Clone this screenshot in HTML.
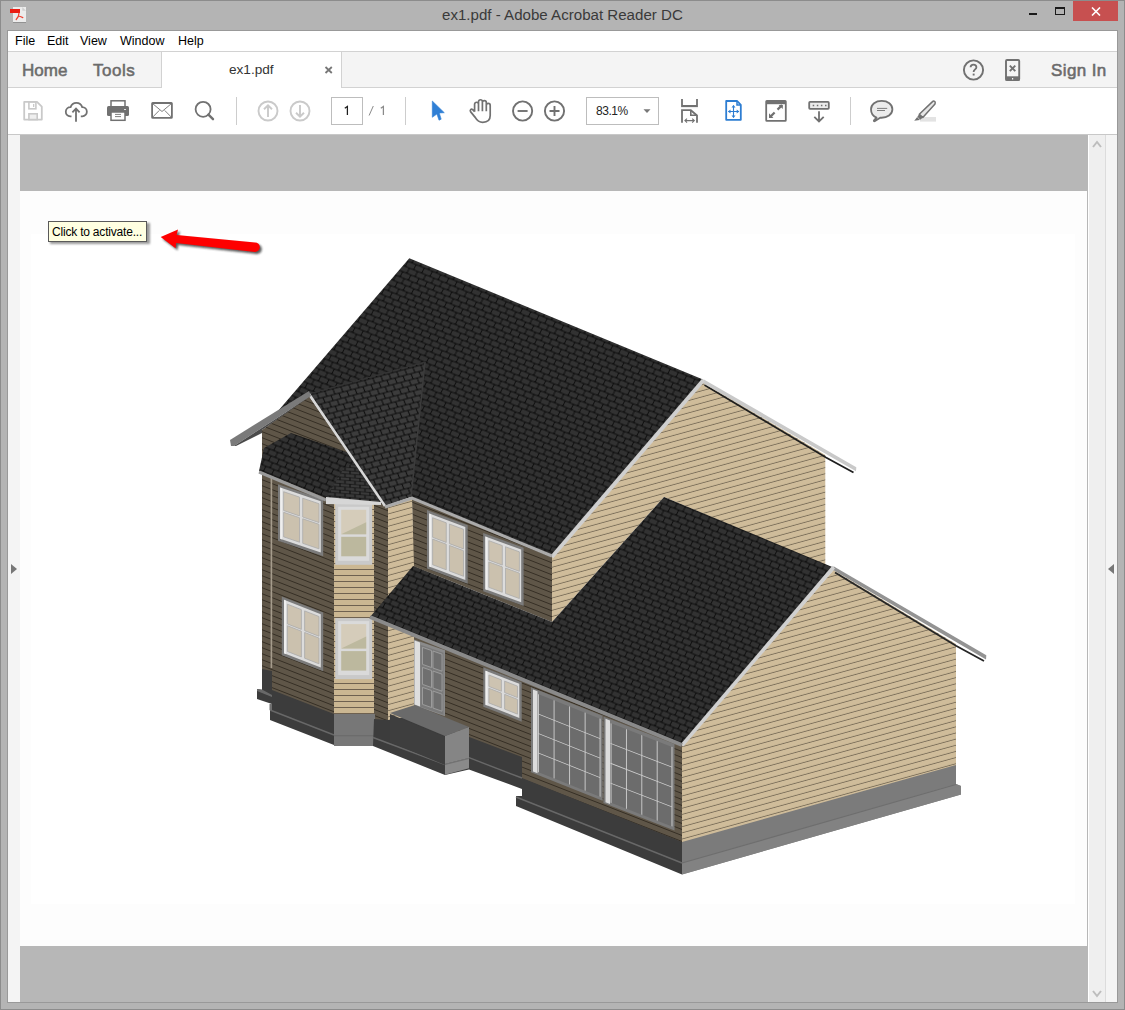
<!DOCTYPE html>
<html><head><meta charset="utf-8">
<style>
*{margin:0;padding:0;box-sizing:border-box}
html,body{width:1125px;height:1010px;overflow:hidden;background:#b4b4b4;font-family:"Liberation Sans",sans-serif}
.a{position:absolute}
.t{position:absolute;white-space:nowrap;line-height:1}
</style></head><body>
<!-- outer frame -->
<div class="a" style="left:0;top:0;width:1125px;height:1010px;border:1px solid #8c8c8c;border-right-color:#8c8c8c"></div>
<!-- title -->
<svg class="a" style="left:0;top:0" width="30" height="26" viewBox="0 0 30 26">
  <rect x="13" y="7" width="13" height="15" fill="#ececec"/>
  <rect x="13" y="22" width="13" height="0.8" fill="#8a8a8a"/>
  <path d="M22.3 7 L26 10.7 L22.3 10.7 Z" fill="#d0d0d0"/>
  <rect x="10" y="9" width="10" height="4" fill="#ea1c12"/>
  <path d="M19 13 C19 15.5 18 17.5 16.2 19.5 M18.4 16 C20 16.5 21.5 17 22.8 17.6" stroke="#ee4031" stroke-width="1.2" fill="none" stroke-linecap="round"/>
</svg>
<div class="t" style="left:442px;top:7px;font-size:15.1px;color:#3a3a3a">ex1.pdf - Adobe Acrobat Reader DC</div>
<div class="a" style="left:1029px;top:13px;width:8px;height:2px;background:#1a1a1a"></div>
<div class="a" style="left:1055px;top:7px;width:10px;height:8px;border:1px solid #1a1a1a;border-top-width:2px"></div>
<div class="a" style="left:1073px;top:1px;width:45px;height:20px;background:#c75050"></div>
<svg class="a" style="left:1091px;top:7px" width="10" height="9" viewBox="0 0 10 9"><path d="M1 0.5 L9 8.5 M9 0.5 L1 8.5" stroke="#fff" stroke-width="1.6"/></svg>

<!-- content box -->
<div class="a" style="left:7px;top:30px;width:1111px;height:973px;border:1px solid #999;background:#fff"></div>
<!-- menu -->
<div class="t" style="left:15px;top:35px;font-size:12.5px;color:#000">File</div>
<div class="t" style="left:47px;top:35px;font-size:12.5px;color:#000">Edit</div>
<div class="t" style="left:80px;top:35px;font-size:12.5px;color:#000">View</div>
<div class="t" style="left:120px;top:35px;font-size:12.5px;color:#000">Window</div>
<div class="t" style="left:178px;top:35px;font-size:12.5px;color:#000">Help</div>
<!-- tab bar -->
<div class="a" style="left:8px;top:51px;width:1109px;height:37px;background:#f4f4f4;border-top:1px solid #d2d2d2;border-bottom:1px solid #d2d2d2"></div>
<div class="a" style="left:161px;top:51px;width:181px;height:37px;background:#fff;border:1px solid #d2d2d2;border-bottom:none;border-top-color:#d2d2d2"></div>
<div class="t" style="left:22px;top:62px;font-size:17px;color:#6b6b6b;-webkit-text-stroke:0.55px #6b6b6b">Home</div>
<div class="t" style="left:93px;top:62px;font-size:17px;color:#6b6b6b;-webkit-text-stroke:0.55px #6b6b6b;letter-spacing:0.5px">Tools</div>
<div class="t" style="left:229px;top:63px;font-size:13.6px;color:#333">ex1.pdf</div>
<svg class="a" style="left:324px;top:66px" width="9" height="8" viewBox="0 0 9 8"><path d="M1.5 1 L7.8 7 M7.8 1 L1.5 7" stroke="#777" stroke-width="1.8"/></svg>
<div class="t" style="left:1051px;top:62px;font-size:17px;color:#6b6b6b;-webkit-text-stroke:0.55px #6b6b6b;letter-spacing:0.4px">Sign In</div>


<!-- toolbar icons -->
<svg class="a" style="left:0;top:88px" width="960" height="46" viewBox="0 88 960 46">
  <!-- save -->
  <path d="M24.2 101.9 H37 L41.8 106.7 V119.6 H24.2 Z" fill="none" stroke="#c9c9c9" stroke-width="1.8" stroke-linejoin="round"/>
  <rect x="28.9" y="101.9" width="7" height="6.9" fill="none" stroke="#c9c9c9" stroke-width="1.6"/>
  <rect x="33" y="104" width="1.3" height="3" fill="#c9c9c9"/>
  <rect x="28.9" y="113.8" width="8.3" height="5.8" fill="#efefef" stroke="#c9c9c9" stroke-width="1.6"/>
  <!-- cloud -->
  <path d="M71.5 116.3 H70.2 A4.6 4.6 0 0 1 70.6 107.1 A6.1 6.1 0 0 1 82.2 107.1 A4.6 4.6 0 0 1 82.3 116.3 H80.8" fill="none" stroke="#717171" stroke-width="1.8"/>
  <path d="M76 121.8 V108.6 M72.4 112.3 L76 108.6 L79.6 112.3" fill="none" stroke="#717171" stroke-width="1.8"/>
  <!-- printer -->
  <rect x="111" y="100.8" width="14" height="7" fill="#fff" stroke="#717171" stroke-width="1.5"/>
  <rect x="107" y="106" width="22" height="10" rx="1.5" fill="#717171"/>
  <rect x="124" y="109" width="2" height="1" fill="#e0e0e0"/>
  <rect x="111" y="112" width="14" height="8.3" fill="#fff" stroke="#717171" stroke-width="1.5"/>
  <path d="M115 114.4 H121 M115 116.6 H121" stroke="#717171" stroke-width="0.9"/>
  <!-- mail -->
  <rect x="152.1" y="103" width="19.8" height="14.8" rx="0.6" fill="none" stroke="#717171" stroke-width="1.8"/>
  <path d="M152.5 103.5 L162 111.5 L171.5 103.5 M152.5 117.3 L159.3 110.4 M171.5 117.3 L164.7 110.4" fill="none" stroke="#717171" stroke-width="0.9"/>
  <!-- search -->
  <circle cx="203.1" cy="109.3" r="7.5" fill="none" stroke="#717171" stroke-width="1.8"/>
  <path d="M208.4 114.6 L213 119.2" stroke="#717171" stroke-width="2.4" stroke-linecap="round"/>
  <rect x="236" y="97" width="1" height="28" fill="#cdcdcd"/>
  <!-- up/down -->
  <circle cx="268" cy="111" r="9.5" fill="none" stroke="#cacaca" stroke-width="1.9"/>
  <path d="M268 117 V105.5 M264 109.3 L268 105.4 L272 109.3" fill="none" stroke="#cacaca" stroke-width="1.9"/>
  <circle cx="300" cy="111" r="9.5" fill="none" stroke="#cacaca" stroke-width="1.9"/>
  <path d="M300 105 V116.5 M296 112.7 L300 116.6 L304 112.7" fill="none" stroke="#cacaca" stroke-width="1.9"/>
  <rect x="331.5" y="97.5" width="31" height="27" fill="#fff" stroke="#bdbdbd" stroke-width="1"/>
  <rect x="405" y="97" width="1" height="28" fill="#cdcdcd"/>
  <!-- pointer -->
  <path d="M432.3 101 V117.3 L436.9 114 L439 120.2 L441.2 119.2 L439.3 113 L444.3 112.7 Z" fill="#2f7fd5" stroke="#2f7fd5" stroke-width="0.6" stroke-linejoin="round"/>
  <!-- hand -->
  <path d="M474.6 111.8 V104.2 A1.95 1.95 0 0 1 478.5 104.2 V111.2 M478.5 104.2 V101.7 A1.95 1.95 0 0 1 482.4 101.7 V111.2 M482.4 102.6 A1.95 1.95 0 0 1 486.3 102.6 V111.2 M486.3 105.4 A1.95 1.95 0 0 1 490.2 105.4 V115.6 C490.2 120 487.4 122.3 482.8 122.3 C478.6 122.3 476.9 120.4 475.4 117.6 L470.7 111.9 C469.5 110.4 471 108.4 472.7 109.6 L474.6 111.6" fill="none" stroke="#717171" stroke-width="1.7" stroke-linejoin="round"/>
  <!-- zoom out/in -->
  <circle cx="522.6" cy="111" r="9.6" fill="none" stroke="#717171" stroke-width="1.9"/>
  <path d="M517.6 111 H527.6" stroke="#717171" stroke-width="1.9"/>
  <circle cx="554.5" cy="111" r="9.6" fill="none" stroke="#717171" stroke-width="1.9"/>
  <path d="M549.5 111 H559.5 M554.5 106 V116" stroke="#717171" stroke-width="1.9"/>
  <rect x="586.5" y="97.5" width="72" height="27" fill="#fff" stroke="#bdbdbd" stroke-width="1"/>
  <path d="M643.5 109.3 H650.5 L647 113 Z" fill="#777"/>
  <!-- scroll -->
  <path d="M682 99 V106 H697 V99" fill="none" stroke="#717171" stroke-width="1.8"/>
  <rect x="681" y="107.2" width="17" height="1" fill="#e6e6e6"/>
  <path d="M682 122.7 V110.2 H690.8 L697 115.5 V122.7" fill="none" stroke="#717171" stroke-width="1.8"/>
  <path d="M690.8 110.2 V115.3 H697" fill="none" stroke="#717171" stroke-width="1.6"/>
  <path d="M685 120.6 H694.2 M687 118.6 L684.9 120.6 L687 122.6 M692.2 118.6 L694.3 120.6 L692.2 122.6" fill="none" stroke="#717171" stroke-width="1.1"/>
  <!-- fit page -->
  <path d="M726.2 101 H737.2 L740.8 104.8 V119.8 H726.2 Z" fill="none" stroke="#2d7dd2" stroke-width="1.8" stroke-linejoin="round"/>
  <path d="M737 101 V105 H741" fill="none" stroke="#2d7dd2" stroke-width="1.5"/>
  <path d="M733.5 105.5 V117.5 M728.5 111.5 H738.8" stroke="#2d7dd2" stroke-width="1.1"/>
  <path d="M731.5 107.6 L733.5 104.9 L735.5 107.6 Z M731.5 115.4 L733.5 118.1 L735.5 115.4 Z M730.5 109.5 L727.9 111.5 L730.5 113.5 Z M736.7 109.5 L739.3 111.5 L736.7 113.5 Z" fill="#2d7dd2"/>
  <!-- full screen -->
  <rect x="766.2" y="101" width="19.6" height="19.8" rx="0.6" fill="none" stroke="#717171" stroke-width="1.8"/>
  <rect x="766" y="101" width="20" height="3.2" fill="#717171"/>
  <path d="M777.5 109.6 L782 105.1 M774.6 112.5 L770 117.1" stroke="#717171" stroke-width="2.2"/>
  <path d="M778.6 104.9 H782.8 V109.1 Z M769 113.2 V117.9 H773.4 Z" fill="#717171"/>
  <!-- read mode -->
  <rect x="809.2" y="101.9" width="19.6" height="6.9" rx="0.8" fill="#ececec" stroke="#717171" stroke-width="1.8"/>
  <path d="M812.7 105.4 h1.5 M816.8 105.4 h1.5 M820.9 105.4 h1.5 M825 105.4 h1.5" stroke="#717171" stroke-width="1.5"/>
  <path d="M819 111.2 V121.3 M814.3 116.8 L819 121.5 L823.7 116.8" fill="none" stroke="#717171" stroke-width="1.8"/>
  <rect x="850" y="97" width="1" height="28" fill="#cdcdcd"/>
  <!-- comment -->
  <path d="M876.5 117.6 L874 120.3 C873.6 120.8 874 121.4 874.6 121.2 L880.2 117.7 C887.5 118.2 892.4 114.3 892.4 109.2 C892.4 104.3 887.8 100.9 881.7 100.9 C875.6 100.9 871 104.3 871 109.2 C871 113 873.2 116.2 876.5 117.6 Z" fill="#ececec" stroke="#717171" stroke-width="1.8" stroke-linejoin="round"/>
  <path d="M877 108.4 H887.2 M877 110.5 H885" stroke="#717171" stroke-width="0.9"/>
  <!-- highlighter -->
  <rect x="920" y="117" width="16" height="4.6" fill="#e3e3e3"/>
  <path d="M919.3 114.2 L932.5 101.6 C933.5 100.6 935.2 101 935.2 102.5 L935 104 L922.8 117.5 Z" fill="#e6e6e6" stroke="#717171" stroke-width="1.5" stroke-linejoin="round"/>
  <path d="M919.2 114 L922.9 117.6 L920.2 119.7 L917.4 116.8 Z" fill="#717171"/>
  <path d="M917.2 117 L919.9 119.9 L914.2 120.8 Z" fill="#717171"/>
</svg>
<svg class="a" style="left:330px;top:98px" width="60" height="26" viewBox="330 98 60 26">
  <path d="M344.8 108.2 L347.4 106.4 V115" fill="none" stroke="#1e1e1e" stroke-width="1.25"/>
  <path d="M369.1 115.5 L373.3 106" fill="none" stroke="#8a8a8a" stroke-width="1"/>
  <path d="M380.8 108.2 L383.4 106.4 V115" fill="none" stroke="#8a8a8a" stroke-width="1.25"/>
</svg>
<div class="t" style="left:596px;top:105px;font-size:12px;color:#222;letter-spacing:-0.45px">83.1%</div>
<!-- tab bar icons -->
<svg class="a" style="left:960px;top:55px" width="70" height="30" viewBox="960 55 70 30">
  <circle cx="973.5" cy="70" r="9.6" fill="none" stroke="#717171" stroke-width="1.9"/>
  <path d="M970.6 67.3 C970.6 63.6 976.4 63.6 976.4 67.3 C976.4 69.3 973.6 69.6 973.6 72" fill="none" stroke="#717171" stroke-width="1.8"/>
  <rect x="972.7" y="73.6" width="1.9" height="1.9" fill="#717171"/>
  <rect x="1006" y="60" width="13.2" height="20" rx="1" fill="none" stroke="#717171" stroke-width="1.9"/>
  <rect x="1005.5" y="76.3" width="14.2" height="4.3" fill="#717171"/>
  <rect x="1012" y="78" width="1.2" height="1.5" fill="#f4f4f4"/>
  <path d="M1009.8 65.6 L1015.3 71.2 M1015.3 65.6 L1009.8 71.2" stroke="#717171" stroke-width="1.9"/>
</svg>
<!-- toolbar bottom border -->
<div class="a" style="left:8px;top:134px;width:1109px;height:1px;background:#c8c8c8"></div>

<!-- doc area -->
<div class="a" style="left:8px;top:135px;width:12px;height:867px;background:#f4f4f4"></div>
<div class="a" style="left:20px;top:135px;width:1068px;height:867px;background:#b7b7b7"></div>
<div class="a" style="left:20px;top:191px;width:1067px;height:755px;background:#fdfdfd"></div>
<div class="a" style="left:31px;top:234px;width:1044px;height:670px;background:#fff"></div>
<div class="a" style="left:1088px;top:135px;width:1px;height:867px;background:#fff"></div>
<div class="a" style="left:1089px;top:135px;width:16px;height:867px;background:#efefef"></div>
<div class="a" style="left:1105px;top:135px;width:1px;height:867px;background:#dcdcdc"></div>
<div class="a" style="left:1106px;top:135px;width:11px;height:867px;background:#f4f4f4"></div>
<svg class="a" style="left:10px;top:563px" width="8" height="12"><path d="M1 1 L7 6 L1 11 Z" fill="#777"/></svg>
<svg class="a" style="left:1107px;top:563px" width="8" height="12"><path d="M7 1 L1 6 L7 11 Z" fill="#777"/></svg>
<svg class="a" style="left:1092px;top:140px" width="10" height="8"><path d="M1 7 L5 2 L9 7" stroke="#bdbdbd" stroke-width="2" fill="none"/></svg>
<svg class="a" style="left:1092px;top:990px" width="10" height="8"><path d="M1 1 L5 6 L9 1" stroke="#bdbdbd" stroke-width="2" fill="none"/></svg>


<svg class="a" style="left:0;top:0" width="1125" height="1010" viewBox="0 0 1125 1010">
<defs>
  <pattern id="sideF" width="20" height="6" patternUnits="userSpaceOnUse" patternTransform="matrix(1 0.39 0 1 0 0)">
    <rect width="20" height="6" fill="#5f5648"/>
    <rect y="5" width="20" height="1" fill="#352e24"/>
  </pattern>
  <pattern id="sideR" width="20" height="6.15" patternUnits="userSpaceOnUse" patternTransform="matrix(1 -0.275 0 1 0 0)">
    <rect width="20" height="6.15" fill="#cfbc9a"/>
    <rect y="5.2" width="20" height="0.95" fill="#7d705b"/>
  </pattern>
  <pattern id="sideB" width="20" height="6" patternUnits="userSpaceOnUse">
    <rect width="20" height="6" fill="#cbb792"/>
    <rect y="5" width="20" height="1" fill="#6e6150"/>
  </pattern>
  <pattern id="shF" width="8.2" height="10.4" patternUnits="userSpaceOnUse" patternTransform="matrix(1 0.41 -0.5 1 0 0)">
    <rect width="8.2" height="10.4" fill="#0f0f0f"/>
    <rect x="0.45" y="0.45" width="7.3" height="4.3" rx="1" fill="#323232"/>
    <rect x="-3.65" y="5.65" width="7.3" height="4.3" rx="1" fill="#323232"/>
    <rect x="4.55" y="5.65" width="7.3" height="4.3" rx="1" fill="#323232"/>
  </pattern>
  <pattern id="shR" width="8" height="10.8" patternUnits="userSpaceOnUse" patternTransform="matrix(1 -0.27 0.4 1 0 0)">
    <rect width="8" height="10.8" fill="#101010"/>
    <rect x="0.55" y="0.55" width="6.9" height="4.3" rx="0.6" fill="#3c3c3c"/>
    <rect x="-3.45" y="5.95" width="6.9" height="4.3" rx="0.6" fill="#3c3c3c"/>
    <rect x="4.55" y="5.95" width="6.9" height="4.3" rx="0.6" fill="#3c3c3c"/>
  </pattern>
  <pattern id="shG" width="9.5" height="12.06" patternUnits="userSpaceOnUse" patternTransform="matrix(1 0.41 -0.4 1 0 0)">
    <rect width="9.5" height="12.06" fill="#0e0e0e"/>
    <rect x="0.55" y="0.55" width="8.4" height="4.95" rx="0.8" fill="#2d2d2d"/>
    <rect x="-4.2" y="6.58" width="8.4" height="4.95" rx="0.8" fill="#2d2d2d"/>
    <rect x="5.3" y="6.58" width="8.4" height="4.95" rx="0.8" fill="#2d2d2d"/>
  </pattern>
  <pattern id="brick" width="10" height="6.6" patternUnits="userSpaceOnUse" patternTransform="matrix(1 0.08 0 1 0 0.5)">
    <rect width="10" height="6.6" fill="#121212"/>
    <rect x="0.6" y="0.6" width="8.8" height="2.6" fill="#3a3a3a"/>
    <rect x="-4.4" y="3.9" width="8.8" height="2.6" fill="#3a3a3a"/>
    <rect x="5.6" y="3.9" width="8.8" height="2.6" fill="#3a3a3a"/>
  </pattern>
  <filter id="blur1" x="-20%" y="-50%" width="140%" height="200%"><feGaussianBlur stdDeviation="1.2"/></filter>
</defs>
<polygon points="409.3,258.2 703,379.5 552,556 412,499 309,396 272,418" fill="url(#shF)" />
<polygon points="703,382 825.3,455 825.3,565 664,497 552,622 552,556" fill="url(#sideR)" />
<polygon points="412,499 552,556 552,622 413,566" fill="url(#sideF)" />
<polygon points="309,396 262,430 262,673 272,675 272,693 334,717 334,503 386,507" fill="url(#sideF)" />
<rect x="334" y="503" width="40" height="214" fill="url(#sideB)"/>
<rect x="374" y="504" width="14" height="219" fill="url(#sideF)"/>
<polygon points="388,507 412,498 414,566 414,719 388,723" fill="url(#sideR)" />
<polygon points="414,566 682,680 682,845 522,782 522,761 414,719" fill="url(#sideF)" />
<polygon points="833.5,570 956,644 956,770 682,846 682,745" fill="url(#sideR)" />
<g transform="matrix(1 0.375 0 1 427 510)">
<rect x="0" y="0" width="40.7" height="58.5" fill="#7b7b7b"/>
<rect x="2.2" y="2.6" width="36.1" height="53.1" fill="#dcdcdc"/>
<rect x="2.2" y="2.6" width="2" height="53.1" fill="#efefef"/>
<rect x="5.6" y="5.6" width="13.65" height="19.61" fill="#cdc3b1" stroke="#a9a9a9" stroke-width="0.7"/>
<rect x="5.6" y="27.01" width="13.65" height="25.59" fill="#cbc1ae" stroke="#a9a9a9" stroke-width="0.7"/>
<rect x="22.45" y="5.6" width="14.05" height="19.61" fill="#cdc3b1" stroke="#a9a9a9" stroke-width="0.7"/>
<rect x="22.45" y="27.01" width="14.05" height="25.59" fill="#cbc1ae" stroke="#a9a9a9" stroke-width="0.7"/>
</g>
<g transform="matrix(1 0.366 0 1 483.2 533)">
<rect x="0" y="0" width="40.4" height="58.2" fill="#7b7b7b"/>
<rect x="2.2" y="2.6" width="35.8" height="52.8" fill="#dcdcdc"/>
<rect x="2.2" y="2.6" width="2" height="52.8" fill="#efefef"/>
<rect x="5.6" y="5.6" width="13.5" height="19.481" fill="#cdc3b1" stroke="#a9a9a9" stroke-width="0.7"/>
<rect x="5.6" y="26.881" width="13.5" height="25.419" fill="#cbc1ae" stroke="#a9a9a9" stroke-width="0.7"/>
<rect x="22.3" y="5.6" width="13.9" height="19.481" fill="#cdc3b1" stroke="#a9a9a9" stroke-width="0.7"/>
<rect x="22.3" y="26.881" width="13.9" height="25.419" fill="#cbc1ae" stroke="#a9a9a9" stroke-width="0.7"/>
</g>
<g transform="matrix(1 0.34 0 1 278 484.2)">
<rect x="0" y="0" width="45.2" height="56.6" fill="#7b7b7b"/>
<rect x="2.2" y="2.6" width="40.6" height="51.2" fill="#dcdcdc"/>
<rect x="2.2" y="2.6" width="2" height="51.2" fill="#efefef"/>
<rect x="5.6" y="5.6" width="15.9" height="18.793" fill="#cdc3b1" stroke="#a9a9a9" stroke-width="0.7"/>
<rect x="5.6" y="26.193" width="15.9" height="24.507" fill="#cbc1ae" stroke="#a9a9a9" stroke-width="0.7"/>
<rect x="24.7" y="5.6" width="16.3" height="18.793" fill="#cdc3b1" stroke="#a9a9a9" stroke-width="0.7"/>
<rect x="24.7" y="26.193" width="16.3" height="24.507" fill="#cbc1ae" stroke="#a9a9a9" stroke-width="0.7"/>
</g>
<g transform="matrix(1 0.39 0 1 281.8 596.4)">
<rect x="0" y="0" width="41.4" height="58.8" fill="#7b7b7b"/>
<rect x="2.2" y="2.6" width="36.8" height="53.4" fill="#dcdcdc"/>
<rect x="2.2" y="2.6" width="2" height="53.4" fill="#efefef"/>
<rect x="5.6" y="5.6" width="14" height="19.739" fill="#cdc3b1" stroke="#a9a9a9" stroke-width="0.7"/>
<rect x="5.6" y="27.139" width="14" height="25.761" fill="#cbc1ae" stroke="#a9a9a9" stroke-width="0.7"/>
<rect x="22.8" y="5.6" width="14.4" height="19.739" fill="#cdc3b1" stroke="#a9a9a9" stroke-width="0.7"/>
<rect x="22.8" y="27.139" width="14.4" height="25.761" fill="#cbc1ae" stroke="#a9a9a9" stroke-width="0.7"/>
</g>
<rect x="335.2" y="503.8" width="37" height="61" fill="#c9c9c9"/>
<rect x="338.2" y="506.8" width="31" height="54" fill="#dadada"/>
<rect x="341.2" y="509.8" width="25" height="24.5" fill="#d5ccba"/>
<polygon points="341.2,534.3 366.2,522.3 366.2,534.3 341.2,534.3" fill="#bdb99f"/>
<rect x="341.2" y="536.8" width="25" height="19.5" fill="#bcb89e"/>
<rect x="335.2" y="618.1" width="37" height="61" fill="#c9c9c9"/>
<rect x="338.2" y="621.1" width="31" height="54" fill="#dadada"/>
<rect x="341.2" y="624.1" width="25" height="24.5" fill="#d5ccba"/>
<polygon points="341.2,648.6 366.2,636.6 366.2,648.6 341.2,648.6" fill="#bdb99f"/>
<rect x="341.2" y="651.1" width="25" height="19.5" fill="#bcb89e"/>
<g transform="matrix(1 0.39 0 1 483.3 667.2)">
<rect x="0" y="0" width="38.4" height="39.5" fill="#7b7b7b"/>
<rect x="2.2" y="2.6" width="33.8" height="34.1" fill="#dcdcdc"/>
<rect x="2.2" y="2.6" width="2" height="34.1" fill="#efefef"/>
<rect x="5.6" y="5.6" width="12.5" height="11.44" fill="#cdc3b1" stroke="#a9a9a9" stroke-width="0.7"/>
<rect x="5.6" y="18.84" width="12.5" height="14.76" fill="#cbc1ae" stroke="#a9a9a9" stroke-width="0.7"/>
<rect x="21.3" y="5.6" width="12.9" height="11.44" fill="#cdc3b1" stroke="#a9a9a9" stroke-width="0.7"/>
<rect x="21.3" y="18.84" width="12.9" height="14.76" fill="#cbc1ae" stroke="#a9a9a9" stroke-width="0.7"/>
</g>
<g transform="matrix(1 0.397 0 1 531 687.2)">
<rect x="0" y="0" width="71.6" height="85" fill="#7a7a7a"/>
<rect x="2" y="1.5" width="4.5" height="82" fill="#dcdcdc"/>
<rect x="7" y="4" width="62.1" height="78" fill="#6c6c6c"/>
<rect x="7.1" y="4" width="0.9" height="78" fill="#d0d0d0"/>
<rect x="22.625" y="4" width="0.9" height="78" fill="#d0d0d0"/>
<rect x="38.15" y="4" width="0.9" height="78" fill="#d0d0d0"/>
<rect x="53.675" y="4" width="0.9" height="78" fill="#d0d0d0"/>
<rect x="68.6" y="4" width="0.9" height="78" fill="#d0d0d0"/>
<rect x="7" y="23.5" width="62.1" height="0.8" fill="#d0d0d0"/>
<rect x="7" y="43" width="62.1" height="0.8" fill="#d0d0d0"/>
<rect x="7" y="62.5" width="62.1" height="0.8" fill="#d0d0d0"/>
</g>
<g transform="matrix(1 0.387 0 1 603.5 716.4)">
<rect x="0" y="0" width="71" height="86.5" fill="#7a7a7a"/>
<rect x="2" y="1.5" width="4.5" height="83.5" fill="#dcdcdc"/>
<rect x="7" y="4" width="61.5" height="79.5" fill="#6c6c6c"/>
<rect x="7.1" y="4" width="0.9" height="79.5" fill="#d0d0d0"/>
<rect x="22.475" y="4" width="0.9" height="79.5" fill="#d0d0d0"/>
<rect x="37.85" y="4" width="0.9" height="79.5" fill="#d0d0d0"/>
<rect x="53.225" y="4" width="0.9" height="79.5" fill="#d0d0d0"/>
<rect x="68" y="4" width="0.9" height="79.5" fill="#d0d0d0"/>
<rect x="7" y="23.875" width="61.5" height="0.8" fill="#d0d0d0"/>
<rect x="7" y="43.75" width="61.5" height="0.8" fill="#d0d0d0"/>
<rect x="7" y="63.625" width="61.5" height="0.8" fill="#d0d0d0"/>
</g>
<g transform="matrix(1 0.35 0 1 414 639.4)">
<rect x="0" y="0" width="31" height="66" fill="#8a8a8a"/>
<rect x="0.5" y="1" width="5.5" height="64" fill="#dedede"/>
<rect x="6.5" y="3" width="23" height="62" fill="#7a7a7a"/>
<rect x="8.5" y="5" width="9" height="17" fill="#6f6f6f" stroke="#a8a8a8" stroke-width="0.7"/>
<rect x="19" y="5" width="9" height="17" fill="#6f6f6f" stroke="#a8a8a8" stroke-width="0.7"/>
<rect x="8.5" y="25" width="9" height="17" fill="#6f6f6f" stroke="#a8a8a8" stroke-width="0.7"/>
<rect x="19" y="25" width="9" height="17" fill="#6f6f6f" stroke="#a8a8a8" stroke-width="0.7"/>
<rect x="8.5" y="45" width="9" height="17" fill="#6f6f6f" stroke="#a8a8a8" stroke-width="0.7"/>
<rect x="19" y="45" width="9" height="17" fill="#6f6f6f" stroke="#a8a8a8" stroke-width="0.7"/>
</g>
<rect x="270.6" y="478" width="1.6" height="190" fill="#a59c8c"/>
<polygon points="309,394 425,362 411,497 385,506" fill="url(#shR)" />
<polygon points="291,433 349,453 385,506 381,503 326,498 259,471 264,448" fill="url(#shF)" />
<polygon points="326,498 344,468 357,461 384,504" fill="url(#brick)" />
<polyline points="425,362 411,497" stroke="#3c3c3c" stroke-width="1.5" fill="none" />
<polyline points="309,394 425,362" stroke="#343434" stroke-width="1.2" fill="none" />
<polygon points="370,617 413,566 552,622 664,497 833.5,567.5 682,745" fill="url(#shF)" />
<polyline points="704.5,385 826,457.5 853.5,472.5" stroke="#1e1e1e" stroke-width="1.8" fill="none" />
<polygon points="703.5,379.3 856.3,467.2 856,471.3 703.5,383.6" fill="#c9c9c9" />
<polygon points="702,378.8 705,381.2 553.3,558.2 550.6,555.4" fill="#cfcfcf" />
<polyline points="835,572.5 956,645.8 984,661" stroke="#262626" stroke-width="1.8" fill="none" />
<polygon points="833.5,566.3 986.3,655.2 986,659.5 833.5,570.3" fill="#939393" />
<polygon points="832.3,565.8 835,568.4 683.4,746.6 680.8,744" fill="#d0d0d0" />
<polyline points="309,394 385,506" stroke="#d8d8d8" stroke-width="2.5" fill="none" />
<polygon points="309,391 311,396 234,446 231,446 230,440" fill="#7a7a7a" />
<polygon points="311,396 262,430 262,433 236,446 234,446" fill="#4a4a4a" />
<polyline points="259,472 326,500" stroke="#9a9a9a" stroke-width="3" fill="none" />
<polygon points="326,497 381,502 381,505 326,504" fill="#d6d6d6" />
<polyline points="385,507 412,498 552,556" stroke="#aaaaaa" stroke-width="3" fill="none" />
<polyline points="370,617 682,745" stroke="#8a8a8a" stroke-width="4" fill="none" />
<polygon points="262,669 272,671 272,704 257,699 257,689 262,690" fill="#3c3c3c" />
<polygon points="257,689 262,689.5 272,695 272,697 257,691" fill="#686868" />
<polygon points="272,690 334,714 334,745 270,720 270,704 272,704" fill="#3c3c3c" />
<polyline points="270,710 334,735" stroke="#686868" stroke-width="1.4" fill="none" />
<polygon points="269.5,704 272,704 272,710 269.5,710" fill="#707070" />
<rect x="334" y="714" width="41" height="32" fill="#777777"/>
<rect x="334" y="735" width="41" height="1.3" fill="#6c6c6c"/>
<polygon points="374,719 388,720 414,716 522,757 522,789 469,769.5 445,775 373,746" fill="#3c3c3c" />
<polyline points="373,737.5 445,764.5" stroke="#686868" stroke-width="1.4" fill="none" />
<polyline points="469,757.7 522,778" stroke="#686868" stroke-width="1.4" fill="none" />
<polygon points="522,778 682,842 682,874.4 516,806 516,796 522,796" fill="#3c3c3c" />
<polyline points="516,797 682,863" stroke="#686868" stroke-width="1.5" fill="none" />
<polygon points="682,842 956,765 956,784 961,786 961,794.5 682,874.4" fill="#7b7b7b" />
<polygon points="682,863 956,784 961,786 961,794.5 682,874.4" fill="#828282" />
<polyline points="682,863 956,784.5" stroke="#6e6e6e" stroke-width="1.2" fill="none" />
<polygon points="390,713 415,705 469,727 445,736" fill="#6a6a6a" />
<polygon points="390,714 445,737 445,765 390,742" fill="#3e3e3e" />
<polygon points="445,736 469,727 469,758 445,764" fill="#858585" />
<polygon points="445,764 469,758 469,768.3 445,774.7" fill="#8a8a8a" />
<polyline points="445,764.5 469,758.5" stroke="#707070" stroke-width="1" fill="none" />
<path d="M160.7,236.9 L178,229.4 L176.7,234.9 L255,242.4 A4.8,4.8 0 0 1 255,252 L176.1,242.9 L175.6,248.3 Z" fill="#202020" opacity="0.75" transform="translate(2,2)" filter="url(#blur1)"/>
<path d="M160.7,236.9 L178,229.4 L176.7,234.9 L255,242.4 A4.8,4.8 0 0 1 255,252 L176.1,242.9 L175.6,248.3 Z" fill="#fe0000"/>
</svg>
<div class="a" style="left:50px;top:223px;width:100px;height:21px;background:rgba(0,0,0,0.4);filter:blur(1px)"></div>
<div class="a" style="left:48px;top:221px;width:99px;height:21px;background:#ffffe1;border:1px solid #5a5a5a"></div>
<div class="t" style="left:52px;top:226px;font-size:12px;color:#000;letter-spacing:-0.2px">Click to activate...</div>

</body></html>
